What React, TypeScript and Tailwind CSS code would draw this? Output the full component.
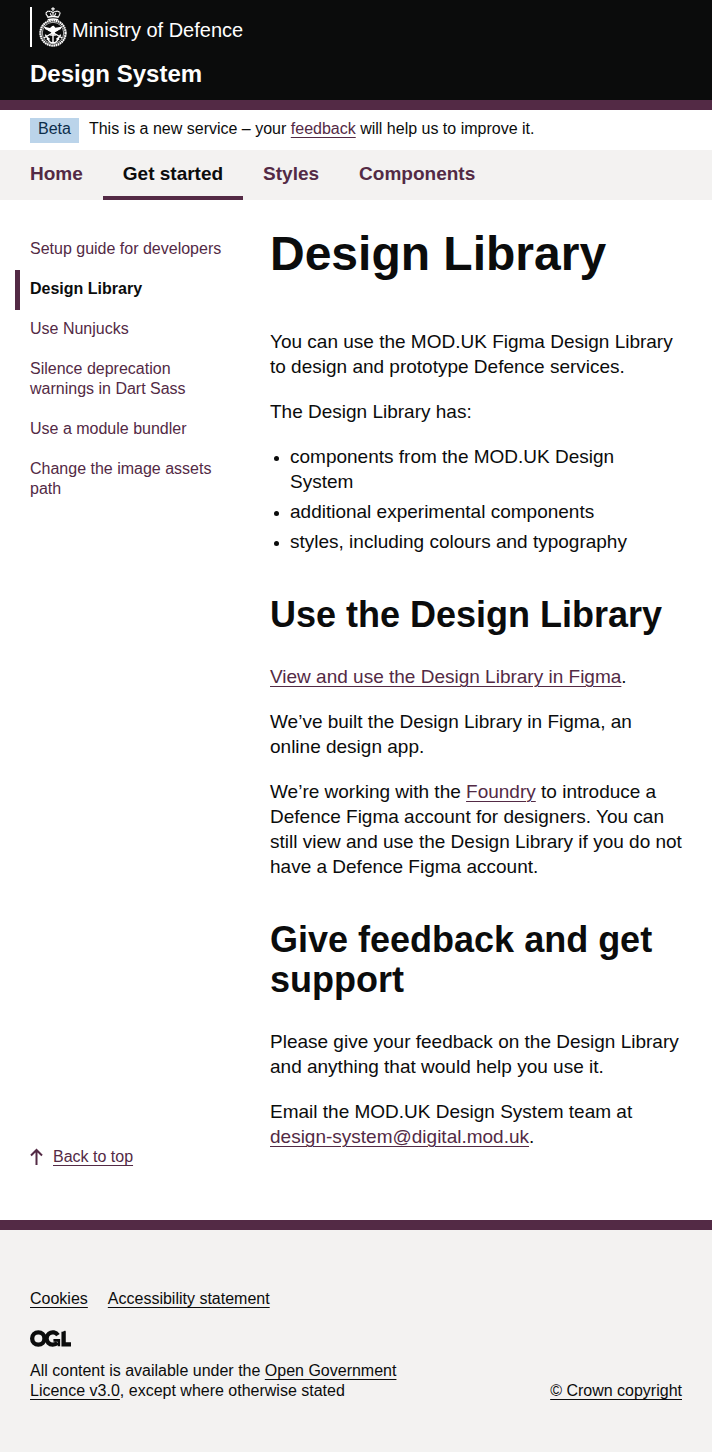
import type { ReactNode } from "react";

const navigation = [
  { label: "Home", current: false },
  { label: "Get started", current: true },
  { label: "Styles", current: false },
  { label: "Components", current: false },
];

const sections = [
  { label: "Setup guide for developers", current: false },
  { label: "Design Library", current: true },
  { label: "Use Nunjucks", current: false },
  { label: "Silence deprecation warnings in Dart Sass", current: false },
  { label: "Use a module bundler", current: false },
  { label: "Change the image assets path", current: false },
];

function Crest() {
  return (
    <svg width="30" height="40" viewBox="0 0 30 40" fill="none" stroke="#fff" aria-hidden="true">
      {/* crown */}
      <path d="M15 .2v3.8M13.2 1.9h3.6" strokeWidth="1.2" />
      <path d="M9.8 9.6C6.4 6.2 8.6 3.9 11.6 4.3c1.8.2 3.4 1.2 3.4 1.2s1.6-1 3.4-1.2c3-.4 5.2 1.9 1.8 5.3" strokeWidth="1.3" strokeDasharray="1.6 .3" />
      <path d="M15 5v5M12.2 6.2l1.3 2.8M17.8 6.2L16.5 9" strokeWidth="1.1" />
      <path d="M9.3 10.2q5.7-1.5 11.4 0M9.8 12.7q5.2-1.3 10.4 0" strokeWidth="1.5" />
      {/* wreath */}
      <circle cx="15" cy="26" r="12.6" strokeWidth="2.2" strokeDasharray="1.7 .5" />
      <circle cx="15" cy="26" r="10.7" strokeWidth=".7" />
      {/* eagle */}
      <path d="M5.4 19.4l6.6 1.5 2.2-1.8 1.6-.3 1.6 2 7.2-1.4-2.4 2.9-1.8.3-1 1.4-2 .3-1.4 2.7-2-.2-1.2-2.6-2.4-.3-.8-1.3-2.2-.3z" fill="#fff" stroke="none" />
      {/* crossed swords */}
      <path d="M5.8 31l17-9.8M24.2 31L7.2 21.2M7.3 27.6l2.8 4.4M22.7 27.6L19.9 32" strokeWidth="1.4" />
      {/* anchor */}
      <path d="M15 26v10M12.2 28h5.6M10 31.3c.6 3 2.4 4.4 5 4.6 2.6-.2 4.4-1.6 5-4.6M9.2 33l.8-1.8 1.6 1.2M20.8 33l-.8-1.8-1.6 1.2" strokeWidth="1.4" />
    </svg>
  );
}

function OglLogo() {
  return (
    <svg width="41" height="17" viewBox="0 0 483 196" fill="none" stroke="#0b0c0c" strokeWidth="51" role="img" aria-label="Open Government Licence">
      <circle cx="98" cy="98" r="72.5" />
      <path d="M329 59A72.5 72.5 0 1 0 322 146" />
      <path d="M276 120H340V190" strokeWidth="30" />
      <path d="M396 18V168H483" />
      <path d="M388 29L418 10" strokeWidth="18" />
    </svg>
  );
}

function TextLink({ children, dark = false }: { children: ReactNode; dark?: boolean }) {
  return (
    <a
      href="#top"
      className={
        dark
          ? "text-[#0b0c0c] underline decoration-1 underline-offset-3"
          : "text-[#532a45] underline decoration-1 underline-offset-3"
      }
    >
      {children}
    </a>
  );
}

export default function App() {
  return (
    <div id="top" className="bg-white font-['Liberation_Sans',Arial,sans-serif] text-base leading-5 text-[#0b0c0c]">
      <header className="border-b-10 border-[#532a45] bg-[#0b0c0c] px-[30px] pt-[7px] pb-[11px] text-white">
        <a href="#top" className="flex h-10 w-fit items-center border-l-2 border-white pl-[6px]">
          <Crest />
          <span className="ml-1 pt-[6px] text-xl leading-6">Ministry of Defence</span>
        </a>
        <a href="#top" className="mt-3 block w-fit text-2xl leading-[30px] font-bold">
          Design System
        </a>
      </header>

      <div className="flex items-start gap-[10px] px-[30px] pt-2 pb-[7px]">
        <strong className="bg-[#bbd4ea] px-2 pt-px pb-1 font-normal text-[#0c2d4a]">Beta</strong>
        <p className="pt-px">
          This is a new service – your <TextLink>feedback</TextLink> will help us to improve it.
        </p>
      </div>

      <nav aria-label="Main" className="bg-[#f3f2f1] px-[10px]">
        <ul className="flex flex-wrap text-[19px] leading-[25px] font-bold">
          {navigation.map((item) => (
            <li key={item.label}>
              <a
                href="#top"
                aria-current={item.current ? "page" : undefined}
                className={
                  item.current
                    ? "block border-b-4 border-[#532a45] px-5 pt-[11px] pb-[10px] text-[#0b0c0c]"
                    : "block border-b-4 border-transparent px-5 pt-[11px] pb-[10px] text-[#532a45]"
                }
              >
                {item.label}
              </a>
            </li>
          ))}
        </ul>
      </nav>

      <div className="flex gap-10 px-[30px] pt-[29px] pb-[51px]">
        <aside className="flex w-50 shrink-0 flex-col justify-between pt-px">
          <nav aria-label="Get started">
            <ul>
              {sections.map((item) => (
                <li key={item.label}>
                  <a
                    href="#top"
                    aria-current={item.current ? "page" : undefined}
                    className={
                      item.current
                        ? "-ml-[15px] block border-l-5 border-[#532a45] pt-[9px] pb-[11px] pl-[10px] font-bold"
                        : "block pt-[9px] pb-[11px] text-[#532a45]"
                    }
                  >
                    {item.label}
                  </a>
                </li>
              ))}
            </ul>
          </nav>
          <div className="flex items-center gap-[10px] leading-[25px]">
            <svg width="13" height="17" viewBox="0 0 13 17" fill="none" stroke="#532a45" strokeWidth="2" aria-hidden="true">
              <path d="M6.5 17V2M1 7.5L6.5 2 12 7.5" />
            </svg>
            <TextLink>Back to top</TextLink>
          </div>
        </aside>

        <main className="min-w-0 flex-1 text-[19px] leading-[25px]">
          <h1 className="mb-[50px] text-5xl leading-[50px] font-bold">Design Library</h1>
          <p className="mb-5">You can use the MOD.UK Figma Design Library to design and prototype Defence services.</p>
          <p className="mb-5">The Design Library has:</p>
          <ul className="mb-[41px] list-disc space-y-[5px] pl-5 marker:text-base">
            <li>components from the MOD.UK Design System</li>
            <li>additional experimental components</li>
            <li>styles, including colours and typography</li>
          </ul>
          <h2 className="mb-[29px] text-4xl leading-10 font-bold">Use the Design Library</h2>
          <p className="mb-5">
            <TextLink>View and use the Design Library in Figma</TextLink>.
          </p>
          <p className="mb-5">We’ve built the Design Library in Figma, an online design app.</p>
          <p className="mb-[41px]">
            We’re working with the <TextLink>Foundry</TextLink> to introduce a Defence Figma account for designers. You can
            still view and use the Design Library if you do not have a Defence Figma account.
          </p>
          <h2 className="mb-[29px] text-4xl leading-10 font-bold">Give feedback and get support</h2>
          <p className="mb-5">Please give your feedback on the Design Library and anything that would help you use it.</p>
          <p className="mb-5">
            Email the MOD.UK Design System team at <TextLink>design-system@digital.mod.uk</TextLink>.
          </p>
        </main>
      </div>

      <footer className="border-t-10 border-[#532a45] bg-[#f3f2f1] px-[30px] pt-[59px] pb-[51px]">
        <ul className="mb-[21px] flex gap-5">
          <li>
            <TextLink dark>Cookies</TextLink>
          </li>
          <li>
            <TextLink dark>Accessibility statement</TextLink>
          </li>
        </ul>
        <div className="flex items-end justify-between gap-10">
          <div className="max-w-[400px]">
            <div className="mb-[14px] flex">
              <OglLogo />
            </div>
            <p>
              All content is available under the <TextLink dark>Open Government Licence v3.0</TextLink>, except where
              otherwise stated
            </p>
          </div>
          <TextLink dark>© Crown copyright</TextLink>
        </div>
      </footer>
    </div>
  );
}
